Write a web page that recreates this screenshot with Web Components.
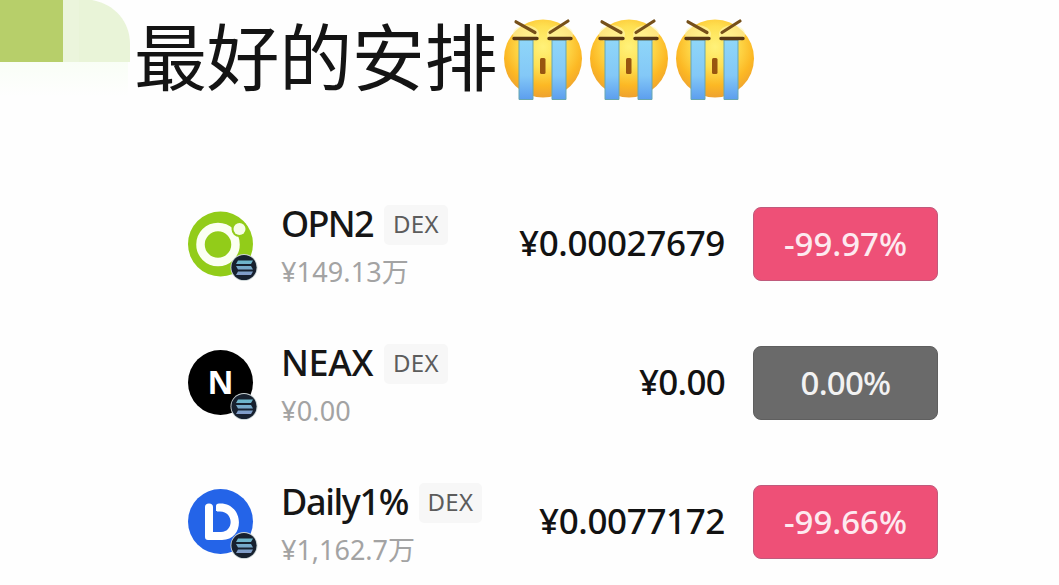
<!DOCTYPE html>
<html lang="zh-CN">
<head>
<meta charset="utf-8">
<title>最好的安排</title>
<style>
body{margin:0;background:#fefefe;overflow:hidden;font-family:"Noto Sans","Noto Sans CJK SC",sans-serif}
</style>
</head>
<body>
<market-page></market-page>
<script>
const define=(name,html,setup)=>customElements.define(name,class extends HTMLElement{
  constructor(){super();this.attachShadow({mode:'open'}).innerHTML=html;}
  connectedCallback(){if(setup)setup(this,this.shadowRoot);}
});

/* One line of text, tracked out or in to a given width. */
define('fit-text',`<style>:host{display:block;white-space:nowrap}span{display:inline-block;white-space:nowrap}</style><span></span>`,(el,r)=>{
  const s=r.querySelector('span');s.textContent=el.getAttribute('text');
  const w=+el.getAttribute('w');el.style.width=w+'px';
  const n=[...s.textContent].length;
  s.style.letterSpacing=((w-s.getBoundingClientRect().width)/n)+'px';
});

define('corner-art',`<style>:host{display:block;width:134px;height:100px;flex:none}svg{display:block}</style>
<svg width="134" height="100"><defs><linearGradient id="h" x2="0" y2="1"><stop stop-color="#f9fef6"/><stop offset="1" stop-color="#fefefe"/></linearGradient></defs>
<rect y="62" width="128" height="34" fill="url(#h)"/><path d="M63 0H92C115 4 130 22 130 44V62H63Z" fill="#e9f4d8"/><path d="M63 0H79V62H63Z" fill="#ebf5dc"/><rect width="63" height="62" fill="#b7cf6a"/></svg>`);

define('crying-face',`<style>:host{display:block;width:80px;height:84px;flex:none}svg{display:block}</style>
<svg width="80" height="84" viewBox="0 0 80 84"><defs>
<radialGradient id="f" cx=".5" cy=".35" r=".66"><stop stop-color="#fff27a"/><stop offset=".4" stop-color="#fee052"/><stop offset=".75" stop-color="#fcb824"/><stop offset="1" stop-color="#eda030"/></radialGradient>
<linearGradient id="t" x2="0" y2="1"><stop stop-color="#8fd6f8"/><stop offset=".6" stop-color="#83c8f7"/><stop offset="1" stop-color="#5c9eee"/></linearGradient></defs>
<circle cx="40" cy="40.500" r="39" fill="url(#f)"/>
<ellipse cx="23" cy="16" rx="13" ry="9" fill="#fff6b0" opacity=".6"/><ellipse cx="57" cy="16" rx="13" ry="9" fill="#fff6b0" opacity=".6"/>
<path d="M16 22H30V81.500H16ZM49 22H63V81.500H49Z" fill="url(#t)" stroke="#68a7b0" stroke-width="1"/>
<path d="M11 20.500H34M46 20.500H68" stroke="#583713" stroke-width="3.400" stroke-linecap="round"/>
<path d="M13 3.800L32 14.500M65 3L47 14.500" stroke="#76501a" stroke-width="3.200" stroke-linecap="round"/>
<rect x="37" y="40" width="5.500" height="16" rx="1.500" fill="#985510"/></svg>`);

define('page-title',`<style>:host{display:flex;height:140px;align-items:flex-start}
.t{font:400 73px/80px "Noto Sans CJK SC",sans-serif;color:#141414;padding-top:13px}
.e{display:flex;gap:6px;padding:18px 0 0 6px}</style>
<corner-art></corner-art><fit-text class="t" w="363" text="最好的安排"></fit-text><div class="e"><crying-face></crying-face><crying-face></crying-face><crying-face></crying-face></div>`);

const marks={
opn:`<circle cx="32.500" cy="33" r="32.500" fill="#92cc19"/><circle cx="30" cy="33.500" r="17.500" fill="none" stroke="#fbfff2" stroke-width="8.500"/><circle cx="51.500" cy="18" r="8" fill="#92cc19"/><circle cx="51.500" cy="18" r="6" fill="#f6fde8"/>`,
neax:`<circle cx="32.500" cy="32.500" r="32.500" fill="#000"/><text x="32.500" y="43.500" text-anchor="middle" font-family="Noto Sans" font-weight="700" font-size="32" fill="#fff">N</text>`,
daily:`<circle cx="32.500" cy="32.500" r="32.500" fill="#2464e8"/><path d="M17 18Q17 14.500 21 14.500Q25 14.500 25 18V43H33C46 43 46 22.500 32 22.500H28V17Q28 14.500 31 14.500C56 13 58 51 34 51H20Q17 51 17 48Z" fill="#fff"/><path d="M25 22H29V43H25Z" fill="#2464e8"/>`};
define('token-icon',`<style>:host{display:block;width:72px;height:74px;flex:none}svg{display:block}</style><svg width="72" height="74" viewBox="0 0 72 74"></svg>`,(el,r)=>{
  r.querySelector('svg').innerHTML=`<defs><linearGradient id="s" x2="0" y2="1"><stop stop-color="#6bb9cb"/><stop offset="1" stop-color="#829ac8"/></linearGradient></defs>`+marks[el.getAttribute('mark')]+
  `<circle cx="56" cy="56.500" r="13.500" fill="#cbd5d6"/><circle cx="56" cy="56.500" r="12.600" fill="#17212f"/><path d="M50 49.500H65L63 53H48ZM48 55H63L65 58.500H50ZM50 60.500H65L63 64H48Z" fill="url(#s)"/>`;
});

define('dex-tag',`<style>:host{display:flex;justify-content:center;width:64px;height:40px;border-radius:5px;background:#f7f7f7;color:#5c5c5c;font-size:24px;line-height:37px}</style><fit-text w="46" text="DEX"></fit-text>`);

define('change-pill',`<style>:host{display:flex;align-items:center;justify-content:center;box-sizing:border-box;width:185px;height:74px;border-radius:8px;border:1px solid #c05a7c;background:#ee5077;color:#fdeaf0;font-weight:500;font-size:33px;line-height:74px}
:host([flat]){background:#6a6a6a;border-color:#5f5f5f;color:#f2f2f2}</style><slot></slot>`);

define('token-row','',(el,r)=>{
  const a=k=>el.getAttribute(k);
  r.innerHTML=`<style>:host{display:grid;grid-template-columns:94px 200px 1fr 185px;height:74px;width:750px}
  token-icon{margin-top:4px}.n{display:flex;gap:11px;height:40px;margin-top:-2px}
  .name{font-weight:500;font-size:36px;line-height:37px;color:#161616;margin-left:-1px}
  .sub{font-size:27px;line-height:34px;margin:10px 0 0 -1px;color:#a3a3a3}
  .price{justify-self:end;margin-right:28px;font-weight:500;font-size:35px;line-height:72px;color:#121212}</style>
  <token-icon mark="${a('mark')}"></token-icon>
  <div><div class="n"><fit-text class="name" w="${a('nw')}" text="${a('name')}"></fit-text><dex-tag></dex-tag></div>
  <fit-text class="sub" w="${a('sw')}" text="${a('sub')}"></fit-text></div>
  <fit-text class="price" w="${a('pw')}" text="${a('price')}"></fit-text>
  <change-pill ${a('flat')!==null?'flat':''}><fit-text w="${a('cw')}" text="${a('change')}"></fit-text></change-pill>`;
});

define('market-page',`<style>:host{display:block;width:1059px;height:585px;overflow:hidden}
.l{display:flex;flex-direction:column;gap:65px;padding:67px 0 0 188px}</style>
<page-title></page-title><div class="l">
<token-row mark="opn" name="OPN2" nw="92" sub="¥149.13万" sw="128" price="¥0.00027679" pw="206" change="-99.97%" cw="123"></token-row>
<token-row mark="neax" name="NEAX" nw="92" sub="¥0.00" sw="70" price="¥0.00" pw="86" change="0.00%" cw="90" flat></token-row>
<token-row mark="daily" name="Daily1%" nw="127" sub="¥1,162.7万" sw="134" price="¥0.0077172" pw="186" change="-99.66%" cw="123"></token-row></div>`);
</script>
</body>
</html>
